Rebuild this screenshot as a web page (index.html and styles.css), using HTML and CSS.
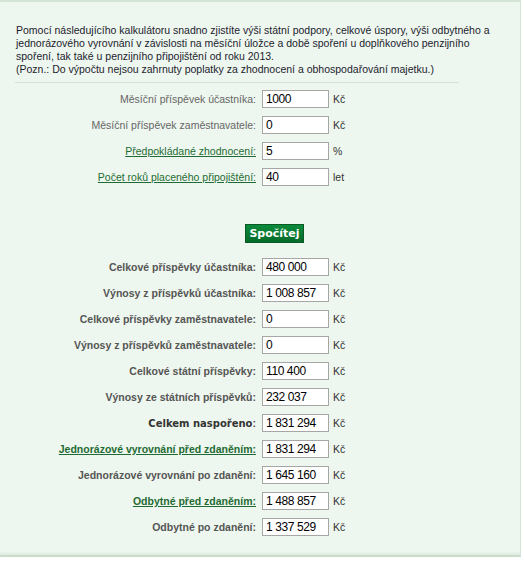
FILE: index.html
```html
<!DOCTYPE html>
<html lang="cs">
<head>
<meta charset="utf-8">
<title>Kalkulátor</title>
<link rel="stylesheet" href="styles.css">
</head>
<body>
<div class="box">
  <p class="intro">Pomocí následujícího kalkulátoru snadno zjistíte výši státní podpory, celkové úspory, výši odbytného a jednorázového vyrovnání v závislosti na měsíční úložce a době spoření u doplňkového penzijního spoření, tak také u penzijního připojištění od roku 2013.<br>(Pozn.: Do výpočtu nejsou zahrnuty poplatky za zhodnocení a obhospodařování majetku.)</p>
  <hr class="sep">
  <div class="form inputs">
    <span class="lbl">Měsíční příspěvek účastníka:</span><span class="inp">1000</span><span class="unit">Kč</span>
    <span class="lbl">Měsíční příspěvek zaměstnavatele:</span><span class="inp">0</span><span class="unit">Kč</span>
    <a class="lbl link" href="#">Předpokládané zhodnocení:</a><span class="inp">5</span><span class="unit">%</span>
    <a class="lbl link" href="#">Počet roků placeného připojištění:</a><span class="inp">40</span><span class="unit">let</span>
  </div>
  <div class="btnrow"><button class="btn">Spočítej</button></div>
  <div class="form results">
    <span class="lbl">Celkové příspěvky účastníka:</span><span class="inp">480 000</span><span class="unit">Kč</span>
    <span class="lbl">Výnosy z příspěvků účastníka:</span><span class="inp">1 008 857</span><span class="unit">Kč</span>
    <span class="lbl">Celkové příspěvky zaměstnavatele:</span><span class="inp">0</span><span class="unit">Kč</span>
    <span class="lbl">Výnosy z příspěvků zaměstnavatele:</span><span class="inp">0</span><span class="unit">Kč</span>
    <span class="lbl">Celkové státní příspěvky:</span><span class="inp">110 400</span><span class="unit">Kč</span>
    <span class="lbl">Výnosy ze státních příspěvků:</span><span class="inp">232 037</span><span class="unit">Kč</span>
    <span class="lbl"><b class="total">Celkem naspořeno</b>:</span><span class="inp">1 831 294</span><span class="unit">Kč</span>
    <a class="lbl link" href="#">Jednorázové vyrovnání před zdaněním:</a><span class="inp">1 831 294</span><span class="unit">Kč</span>
    <span class="lbl">Jednorázové vyrovnání po zdanění:</span><span class="inp">1 645 160</span><span class="unit">Kč</span>
    <a class="lbl link" href="#">Odbytné před zdaněním:</a><span class="inp">1 488 857</span><span class="unit">Kč</span>
    <span class="lbl">Odbytné po zdanění:</span><span class="inp">1 337 529</span><span class="unit">Kč</span>
  </div>
</div>
</body>
</html>
```
FILE: styles.css
```css
html, body {
  margin: 0;
  padding: 0;
  background: #ffffff;
}
.box {
  width: 521px;
  height: 557px;
  box-sizing: border-box;
  background: #eef7ef;
  border-top: 2px solid #d3e4d6;
  border-right: 1px solid #d3e4d6;
  border-bottom: 2px solid #c9dccc;
  box-shadow: inset 0 -3px 3px -1px #dcecdf;
  font-family: "Liberation Sans", Arial, sans-serif;
  font-size: 10.5px;
  color: #222;
}
.intro {
  margin: 0;
  padding: 22px 10px 0 16px;
  line-height: 13px;
  color: #1c1c2e;
}
.sep {
  margin: 6px 0 0 15px;
  width: 444px;
  border: 0;
  border-top: 1px solid #d5e3d7;
  height: 0;
}
.form {
  display: grid;
  grid-template-columns: 256px 67px auto;
  column-gap: 6px;
  row-gap: 8px;
  align-items: center;
}
.inputs {
  margin-top: 7px;
}
.lbl {
  text-align: right;
  color: #666;
  white-space: nowrap;
}
.link {
  color: #1f6b33;
  text-decoration: underline;
}
.inp {
  box-sizing: border-box;
  height: 18px;
  border: 1px solid #a6a6a6;
  background: #fff;
  color: #000;
  font-size: 12px;
  letter-spacing: -0.4px;
  line-height: 16px;
  padding-left: 3px;
}
.unit {
  color: #333;
  font-size: 10.5px;
  margin-left: -2px;
}
.btnrow {
  display: flex;
  justify-content: flex-start;
  padding-left: 245px;
  margin-top: 38px;
}
.btn {
  box-sizing: border-box;
  width: 59px;
  height: 19px;
  background: linear-gradient(#0b8a3a, #056b2b);
  border: 1px solid #0a5a25;
  color: #fff;
  font-family: "DejaVu Sans", Verdana, sans-serif;
  font-weight: bold;
  font-size: 11px;
  padding: 0;
}
.results {
  margin-top: 15px;
}
.results .lbl {
  font-weight: bold;
  color: #555;
}
.results .link {
  color: #1f6b33;
}
.total {
  font-family: "DejaVu Sans", Verdana, sans-serif;
  font-size: 10px;
  color: #333;
}
```
